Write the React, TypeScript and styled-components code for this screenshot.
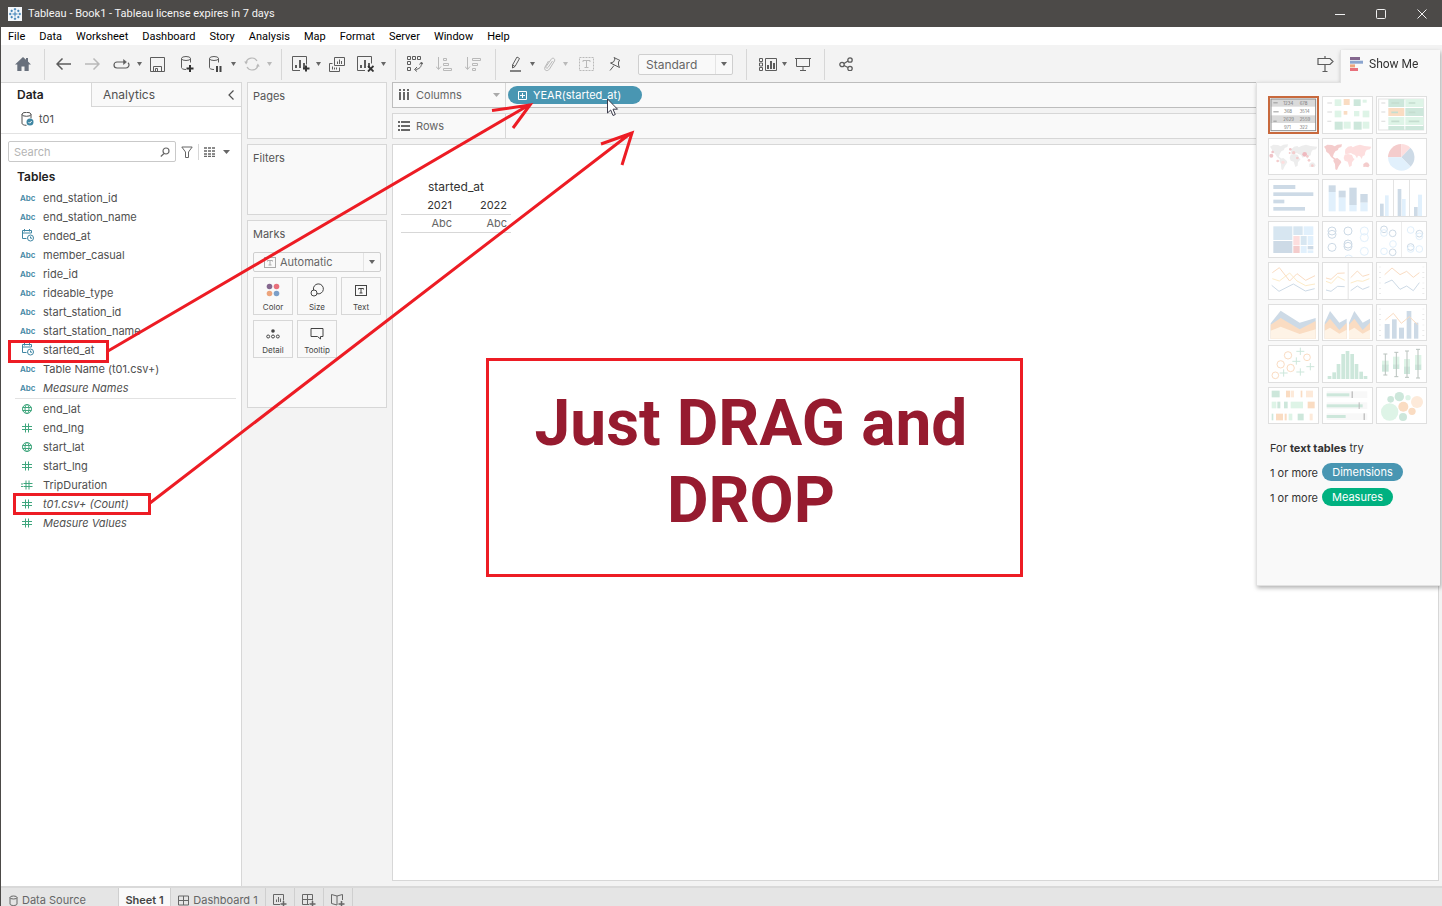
import React from "react";
import styled, { createGlobalStyle, css } from "styled-components";

const ui = `Inter, "Open Sans", sans-serif`;
const sys = `Roboto, "Open Sans", sans-serif`;
const red = "#ed1c24";
const line = "#d7d7d7";
const blue = "#4996b2";
const green = "#00b180";

const GlobalStyle = createGlobalStyle`
  * { box-sizing: border-box; }
  body { margin: 0; font-family: ${ui}; font-size: 11px; color: #505050; background: #f3f3f3; }
  button, input, select { font: inherit; color: inherit; margin: 0; padding: 0; border: 0; background: none; border-radius: 0; }
  svg { display: block; flex: none; }
  ul, h2, p { margin: 0; padding: 0; list-style: none; }
`;

const Window = styled.div`
  position: relative;
  display: flex;
  flex-direction: column;
  height: 100vh;
  min-height: 640px;
  border-left: 1px solid #4c4a48;
  overflow: hidden;
`;

const TitleBar = styled.header`
  flex: none;
  height: 27px;
  display: flex;
  align-items: center;
  gap: 6px;
  padding-left: 7px;
  background: #4c4a48;
  color: #f4f4f4;
  font: 11px ${sys};
`;
const WindowButtons = styled.div`
  margin-left: auto;
  display: flex;
`;
const WindowButton = styled.button`
  width: 41px;
  height: 27px;
  display: flex;
  align-items: center;
  justify-content: center;
  color: #f0f0f0;
`;

const MenuBar = styled.nav`
  flex: none;
  height: 18px;
  display: flex;
  align-items: center;
  gap: 14px;
  padding: 1px 0 0 7px;
  background: #fff;
`;
const MenuItem = styled.button`
  font: 11px ${sys};
  line-height: 18px;
  color: #000;
`;

const Toolbar = styled.div`
  flex: none;
  height: 37px;
  display: flex;
  align-items: center;
  padding-top: 1px;
`;
const ToolGroup = styled.div<{ $lead: number; $trail?: number; $first?: boolean }>`
  display: flex;
  align-items: center;
  height: 31px;
  padding: 0 ${(p) => p.$trail ?? 8}px 0 ${(p) => p.$lead}px;
  border-left: ${(p) => (p.$first ? "0" : `1px solid ${line}`)};
`;
const Tool = styled.button<{ $narrow?: boolean; $dim?: boolean }>`
  width: ${(p) => (p.$narrow ? 26 : 29)}px;
  height: 28px;
  display: flex;
  align-items: center;
  justify-content: center;
  color: ${(p) => (p.$dim ? "#b9b9b9" : "#5c5c5c")};
`;
const CaretButton = styled.button<{ $dim?: boolean }>`
  width: 7px;
  height: 28px;
  display: flex;
  align-items: center;
  justify-content: center;
  color: ${(p) => (p.$dim ? "#b9b9b9" : "#666")};
`;
const Spacer = styled.div`
  flex: 1;
`;
const Gap = styled.div<{ $w: number }>`
  width: ${(p) => p.$w}px;
`;
const SelectBox = styled.div<{ $width?: number; $height: number }>`
  display: flex;
  align-items: center;
  position: relative;
  width: ${(p) => (p.$width ? `${p.$width}px` : "100%")};
  height: ${(p) => p.$height}px;
  border: 1px solid #cfcfcf;
  border-radius: 2px;
  background: #f9f9f9;
  color: #666;
`;
const Select = styled.select<{ $indent: number; $big?: boolean }>`
  appearance: none;
  width: 100%;
  height: 100%;
  padding-left: ${(p) => p.$indent}px;
  font-size: ${(p) => (p.$big ? 12 : 11)}px;
`;
const SelectArrow = styled.span`
  position: absolute;
  right: 0;
  top: 0;
  bottom: 0;
  width: 17px;
  display: flex;
  align-items: center;
  justify-content: center;
  border-left: 1px solid #e4e4e4;
  pointer-events: none;
`;
const SelectIcon = styled.span`
  position: absolute;
  left: 10px;
  color: #aaa;
  pointer-events: none;
`;

const Workspace = styled.div`
  flex: 1;
  min-height: 0;
  display: flex;
`;

const DataPane = styled.aside`
  flex: none;
  width: 241px;
  background: #fff;
  border-top: 1px solid ${line};
  border-right: 1px solid ${line};
`;
const PaneTabs = styled.div`
  display: flex;
  height: 24px;
`;
const PaneTab = styled.button<{ $active?: boolean }>`
  font-size: 12px;
  text-align: left;
  ${(p) =>
    p.$active
      ? css`
          width: 90px;
          padding: 0 0 2px 16px;
          font-weight: 600;
          color: #222;
        `
      : css`
          flex: 1;
          padding-left: 11px;
          background: #f9f9f9;
          border-left: 1px solid ${line};
          border-bottom: 1px solid ${line};
        `}
`;
const Collapse = styled.button`
  width: 20px;
  display: flex;
  align-items: center;
  justify-content: center;
  background: #f9f9f9;
  border-bottom: 1px solid ${line};
`;
const Source = styled.div`
  height: 27px;
  display: flex;
  align-items: center;
  gap: 4px;
  padding: 0 0 2px 20px;
  border-bottom: 1px solid #e2e2e2;
`;
const SearchRow = styled.div`
  display: flex;
  align-items: center;
  padding: 7px 0 0 7px;
  color: #666;
`;
const SearchBox = styled.label`
  display: flex;
  align-items: center;
  width: 168px;
  height: 21px;
  padding: 0 5px;
  border: 1px solid #c9c9c9;
  border-radius: 2px;
`;
const SearchInput = styled.input`
  flex: 1;
  min-width: 0;
  outline: 0;
  &::placeholder {
    color: #b4b4b4;
  }
`;
const RowTool = styled.button<{ $w: number; $divided?: boolean }>`
  width: ${(p) => p.$w}px;
  height: 16px;
  display: flex;
  align-items: center;
  justify-content: center;
  border-left: ${(p) => (p.$divided ? `1px solid ${line}` : "0")};
`;
const Heading = styled.h2`
  padding: 6px 0 2px 16px;
  font-size: 12px;
  line-height: 18px;
  font-weight: 600;
  color: #222;
`;
const FieldList = styled.ul<{ $divided?: boolean }>`
  margin: 0 5px 0 14px;
  padding-bottom: 1px;
  border-top: ${(p) => (p.$divided ? "1px solid #e2e2e2" : "0")};
`;
const Field = styled.li<{ $italic?: boolean }>`
  display: flex;
  align-items: center;
  height: 19px;
  font-style: ${(p) => (p.$italic ? "italic" : "normal")};
`;
const FieldIcon = styled.span<{ $green?: boolean; $text?: boolean }>`
  width: 28px;
  display: flex;
  padding-left: ${(p) => (p.$text ? 5 : 6)}px;
  font-size: 8px;
  font-style: normal;
  font-weight: 600;
  color: ${(p) => (p.$green ? "#3fa67d" : "#3f86a3")};
`;

const Cards = styled.section`
  flex: none;
  width: 140px;
  margin-left: 5px;
  display: flex;
  flex-direction: column;
  gap: 5px;
`;
const Card = styled.section<{ $h: number }>`
  height: ${(p) => p.$h}px;
  padding: 4px 5px;
  border: 1px solid ${line};
  background: #f9f9f9;
`;
const CardTitle = styled.h2`
  font-size: 11px;
  font-weight: 400;
  line-height: 18px;
  color: #555;
`;
const MarksBody = styled.div`
  padding-top: 9px;
`;
const MarkGrid = styled.div`
  display: grid;
  grid-template-columns: repeat(3, 1fr);
  gap: 5px 4px;
  padding-top: 5px;
`;
const MarkButton = styled.button`
  height: 38px;
  display: flex;
  flex-direction: column;
  align-items: center;
  justify-content: space-between;
  padding: 5px 0 1px;
  border: 1px solid ${line};
  font-size: 8px;
  line-height: 12px;
  color: #444;
`;

const Main = styled.main`
  flex: 1;
  min-width: 0;
  display: flex;
  flex-direction: column;
  gap: 5px;
  padding: 0 3px 5px 5px;
`;
const Shelf = styled.div<{ $active?: boolean }>`
  flex: none;
  display: flex;
  height: 26px;
  border: 1px solid ${(p) => (p.$active ? "#bdbdbd" : line)};
  background: #f9f9f9;
`;
const ShelfLabel = styled.div`
  width: 113px;
  display: flex;
  align-items: center;
  gap: 6px;
  padding: 0 5px;
  border-right: 1px solid ${line};
  color: #666;
`;
const ShelfCaret = styled.span`
  margin-left: auto;
  color: #aaa;
`;
const Pill = styled.button<{ $color: string; $w: number; $lead?: number }>`
  display: inline-flex;
  align-items: center;
  justify-content: ${(p) => (p.$lead ? "flex-start" : "center")};
  gap: 6px;
  width: ${(p) => p.$w}px;
  height: 18px;
  padding-left: ${(p) => p.$lead ?? 0}px;
  border-radius: 9px;
  background: ${(p) => p.$color};
  color: #fff;
`;
const ShelfContent = styled.div`
  padding: 3px 2px;
`;
const View = styled.div`
  flex: 1;
  background: #fff;
  border: 1px solid ${line};
  padding: 33px 8px;
`;
const Crosstab = styled.table`
  border-collapse: collapse;
  width: 110px;
  table-layout: fixed;
  th,
  td {
    height: 18px;
    padding: 0 4px 0 0;
    font-weight: 400;
    line-height: 16px;
    text-align: right;
  }
  thead th {
    color: #333;
  }
  thead th[colspan] {
    font-size: 12px;
    text-align: center;
    padding: 0;
  }
  tbody td {
    border-top: 1px solid ${line};
    border-bottom: 1px solid ${line};
    color: #666;
  }
`;

const SheetTabs = styled.nav`
  flex: none;
  height: 20px;
  display: flex;
  overflow: hidden;
  border-top: 2px solid #d9d9d9;
  background: #e5e5e5;
`;
const SheetTab = styled.button<{ $w: number; $active?: boolean; $start?: boolean }>`
  width: ${(p) => p.$w}px;
  height: 24px;
  display: flex;
  align-items: center;
  justify-content: ${(p) => (p.$start ? "flex-start" : "center")};
  gap: 4px;
  padding-left: ${(p) => (p.$start ? 8 : 0)}px;
  border-right: 1px solid #cfcfcf;
  color: #666;
  ${(p) =>
    p.$active &&
    css`
      background: #f9f9f9;
      font-weight: 600;
      color: #444;
    `}
`;

const ShowMe = styled.section`
  position: absolute;
  top: 50px;
  right: 2px;
  width: 184px;
  display: flex;
  flex-direction: column;
  filter: drop-shadow(1px 2px 2px rgba(0, 0, 0, 0.3));
`;
const ShowMeTab = styled.button`
  align-self: flex-end;
  width: 100px;
  height: 33px;
  margin-bottom: -1px;
  display: flex;
  align-items: center;
  gap: 6px;
  padding: 0 0 6px 9px;
  border-left: 1px solid #e2e2e2;
  background: #f9f9f9;
  font: 12px ${sys};
  color: #333;
  z-index: 1;
`;
const ShowMeBody = styled.div`
  padding: 13px 11px 75px;
  border: 1px solid #e2e2e2;
  border-right: 0;
  background: #f9f9f9;
  color: #333;
`;
const Thumbs = styled.div`
  width: 159px;
  height: 328px;
  display: grid;
  grid-template-columns: repeat(3, 1fr);
  grid-template-rows: repeat(8, 1fr);
  gap: 4px 3px;
`;
const Thumb = styled.button<{ $on?: boolean }>`
  min-height: 0;
  overflow: hidden;
  background: #fff;
  border: 1px solid #dfdfdf;
  outline: ${(p) => (p.$on ? "2px solid #c8693d" : "0")};
  outline-offset: -2px;
`;
const Hint = styled.p`
  display: flex;
  align-items: center;
  gap: 4px;
  height: 25px;
  padding-left: 2px;
  ${Pill} {
    margin-bottom: 2px;
  }
`;
const Hints = styled.div`
  padding-top: 11px;
`;

const Marker = styled.div<{ $x: number; $y: number; $w: number; $h: number }>`
  position: absolute;
  left: ${(p) => p.$x}px;
  top: ${(p) => p.$y}px;
  width: ${(p) => p.$w}px;
  height: ${(p) => p.$h}px;
  border: 3px solid ${red};
  pointer-events: none;
`;
const Callout = styled(Marker)`
  padding: 24px 7px 0 0;
  background: #fff;
  font: 700 64px / 77px Roboto, sans-serif;
  color: #961b2f;
  text-align: center;
`;
const Overlay = styled.svg`
  position: absolute;
  left: -1px;
  top: 0;
  pointer-events: none;
`;

type GlyphProps = { w: number; h: number; sw?: number; children: React.ReactNode };
const Glyph = ({ w, h, sw = 1, children }: GlyphProps) => (
  <svg width={w} height={h} viewBox={`0 0 ${w} ${h}`} fill="none" stroke="currentColor" strokeWidth={sw} aria-hidden="true">
    {children}
  </svg>
);
const Caret = ({ w = 5 }: { w?: number }) => (
  <svg width={w} height="4" viewBox="0 0 6 4" fill="currentColor" preserveAspectRatio="none" aria-hidden="true">
    <path d="M0 0h6L3 4z" />
  </svg>
);
const Cylinder = () => <path d="M.5 2.5v9c0 1 1.500 2 4.500 2M9.500 2.500v4M.5 2.500a4.500 2 0 0 0 9 0a4.500 2 0 0 0-9 0" />;
const TBox = ({ dashed }: { dashed?: boolean }) => (
  <>
    <rect x=".5" y=".5" width={dashed ? 14 : 11} height={dashed ? 13 : 10} strokeDasharray={dashed ? "2 1" : undefined} />
    {dashed ? <path d="M4 5V3.500h7V5M7.500 3.500v7M5.500 10.500h4" /> : <path d="M3.500 4.500v-1h5v1M6 3.500v4.500M4.500 8h3" />}
  </>
);
const Bars = ({ x = 0, y = 0 }: { x?: number; y?: number }) => (
  <path transform={`translate(${x} ${y})`} strokeWidth="2" d="M1 8V5M5 8V0M9 8V3" />
);

const CalendarIcon = () => (
  <Glyph w={14} h={13}>
    <path d="M5.500 9.500h-4v-8h9V4M1.500 4h9M3.500 0v2.500M8.500 0v2.500" />
    <circle cx="9.500" cy="9" r="3" />
    <path d="M9.500 7.500V9.200h1.500" />
  </Glyph>
);
const GlobeIcon = () => (
  <Glyph w={12} h={12}>
    <circle cx="6" cy="6" r="4.500" />
    <ellipse cx="6" cy="6" rx="2" ry="4.500" />
    <path d="M1.500 4.500h9M1.500 7.500h9" />
  </Glyph>
);
const HashIcon = () => (
  <Glyph w={12} h={12}>
    <path d="M4.500 1.500v9M7.500 1.500v9M1 4.500h10M1 7.500h10" />
  </Glyph>
);
const CalcHashIcon = () => (
  <Glyph w={14} h={12}>
    <path d="M-.5 5h2.500M-.5 7.500h2.500M5 1.500v9M8 1.500v9M2.500 4.500h9M2.500 7.500h9" />
  </Glyph>
);

type Kind = "abc" | "date" | "geo" | "num" | "calc";
const FieldGlyph = ({ kind }: { kind: Kind }) => {
  if (kind === "abc") return <>Abc</>;
  if (kind === "date") return <CalendarIcon />;
  if (kind === "geo") return <GlobeIcon />;
  if (kind === "calc") return <CalcHashIcon />;
  return <HashIcon />;
};

const dimensions: [Kind, string, boolean?][] = [
  ["abc", "end_station_id"],
  ["abc", "end_station_name"],
  ["date", "ended_at"],
  ["abc", "member_casual"],
  ["abc", "ride_id"],
  ["abc", "rideable_type"],
  ["abc", "start_station_id"],
  ["abc", "start_station_name"],
  ["date", "started_at"],
  ["abc", "Table Name (t01.csv+)"],
  ["abc", "Measure Names", true],
];
const measures: [Kind, string, boolean?][] = [
  ["geo", "end_lat"],
  ["num", "end_lng"],
  ["geo", "start_lat"],
  ["num", "start_lng"],
  ["calc", "TripDuration"],
  ["num", "t01.csv+ (Count)", true],
  ["num", "Measure Values", true],
];

/* Chart thumbnails: three drawing units to the pixel. */
const b1 = "#cddae6";
const b2 = "#e1f0fc";
const g1 = "#cde7db";
const g2 = "#def4e7";
const o1 = "#fadcc2";
const o2 = "#fdeada";
const r1 = "#f4cccc";
const r2 = "#fddede";
const gray = "#e3e3e3";

type Box = [number, number, number, number, string];
const Rects = ({ items }: { items: Box[] }) => (
  <>
    {items.map(([x, y, w, h, f], i) => (
      <rect key={i} x={x} y={y} width={w} height={h} fill={f} />
    ))}
  </>
);
type Dot = [number, number, number, string];
const Rings = ({ items, filled }: { items: Dot[]; filled?: boolean }) => (
  <>
    {items.map(([x, y, r, c], i) => (
      <circle key={i} cx={x} cy={y} r={r} fill={filled ? c : "none"} stroke={filled ? "none" : c} strokeWidth="3" />
    ))}
  </>
);
const Lines = ({ items }: { items: [string, string][] }) => (
  <>
    {items.map(([d, c], i) => (
      <path key={i} d={d} stroke={c} strokeWidth="3" fill="none" />
    ))}
  </>
);
const Americas = "M6 26l10-6 14 1 8 4 8-5 14-1-2 8-8 3-2 6-8 4-5 8-2 8 6 5-2 4-10-8-6-10-8-6-2-8zM36 62l10-2 10 8 2 5-8 12-5 11-5-2-1-16-5-9z";
const EastLands = "M70 34l8-8 10-2 4 4 10-5 12-3 14 4 20 2-4 8-10 2-4 6-2 10-6 3-3 8-5-8-6-2-3 8-6-10-8-3-4-3-8 2-9 2-1-7zM68 50l10-2 12 3 4 10 4 2-8 10-1 10-7 4-5-16-9-3-3-8z";
const Oceania = "M124 78l8-5 6 1 5 8-4 6-8-2-7 1z";

const charts: { name: string; art: React.ReactNode }[] = [
  {
    name: "Text table",
    art: (
      <>
        <Rects items={[[8, 9, 136, 23, "#dadada"], [8, 58, 136, 23, "#dadada"], [16, 19, 13, 3, "#999"], [16, 46, 16, 3, "#999"], [16, 74, 10, 3, "#999"]]} />
        <rect x="9" y="9" width="134" height="95" fill="none" stroke="#8c8c8c" strokeWidth="3" />
        <g fill="#777" fontSize="13" fontFamily="Inter, sans-serif">
          <text x="46" y="26">1234</text>
          <text x="95" y="26">678</text>
          <text x="48" y="52">368</text>
          <text x="95" y="52">3514</text>
          <text x="46" y="75">2629</text>
          <text x="95" y="75">2559</text>
          <text x="48" y="98">971</text>
          <text x="95" y="98">322</text>
        </g>
      </>
    ),
  },
  {
    name: "Heat map",
    art: (
      <Rects
        items={[
          [16, 19, 14, 4, gray], [16, 46, 14, 4, gray], [16, 74, 12, 4, gray],
          [38, 10, 20, 20, g2], [65, 9, 18, 18, o1], [95, 10, 21, 20, g1], [122, 11, 12, 9, g2],
          [38, 44, 20, 20, g2], [65, 45, 11, 11, o1], [96, 45, 16, 16, g2], [122, 44, 20, 20, g2],
          [38, 77, 24, 24, g1], [65, 77, 21, 21, g2], [95, 77, 24, 24, g1], [122, 77, 20, 21, g2],
        ]}
      />
    ),
  },
  {
    name: "Highlight table",
    art: (
      <>
        <rect x="8" y="9" width="135" height="93" fill="none" stroke={gray} strokeWidth="3" />
        <Rects
          items={[
            [16, 19, 12, 4, gray], [16, 46, 12, 4, gray], [16, 74, 12, 4, gray],
            [37, 9, 48, 24, g1], [88, 9, 55, 24, g2], [37, 36, 48, 24, o1], [88, 36, 55, 24, g1],
            [37, 63, 48, 24, g2], [88, 63, 55, 24, g2], [37, 90, 48, 12, g1], [88, 90, 55, 12, g1],
          ]}
        />
        <path d="M46 21h24M98 21h20M46 49h20M98 49h20M46 76h24M98 76h32" stroke="#c5ddd0" strokeWidth="5" />
      </>
    ),
  },
  {
    name: "Symbol map",
    art: (
      <>
        <path d={Americas + EastLands + Oceania} fill="#ededed" />
        <Rings filled items={[[10, 53, 6, "#efc4c8"], [14, 42, 4, "#efc4c8"], [29, 69, 4, r1], [45, 73, 5, r2], [67, 34, 4, "#efc4c8"], [65, 45, 3, r1], [77, 44, 5, r1], [88, 60, 4, r1], [110, 49, 7, "#efb9bf"], [118, 55, 4, r1], [123, 67, 4, r1], [133, 83, 4, r1]]} />
      </>
    ),
  },
  {
    name: "Filled map",
    art: (
      <>
        <path d={Americas} fill={r1} />
        <path d={EastLands} fill={r2} />
        <path d={Oceania} fill={r1} />
      </>
    ),
  },
  {
    name: "Pie chart",
    art: (
      <>
        <path d="M76 58V18a40 40 0 0 0-40 40z" fill={r1} />
        <path d="M76 58V18a40 40 0 0 1 27 11z" fill={r2} />
        <path d="M76 58l27-29a40 40 0 0 1 1 57z" fill={b1} />
        <path d="M76 58l28 28a40 40 0 0 1-68-28z" fill={b2} />
      </>
    ),
  },
  { name: "Horizontal bars", art: <Rects items={[[16, 18, 66, 12, b1], [16, 40, 120, 11, b1], [16, 62, 33, 11, b1], [16, 84, 95, 11, b1]]} /> },
  {
    name: "Stacked bars",
    art: <Rects items={[[20, 19, 21, 20, b1], [20, 39, 21, 58, b2], [50, 35, 21, 21, b1], [50, 56, 21, 41, b2], [82, 26, 22, 52, b1], [82, 78, 22, 19, b2], [115, 45, 22, 26, b1], [115, 71, 22, 26, b2]]} />,
  },
  {
    name: "Side-by-side bars",
    art: <Rects items={[[12, 74, 11, 38, b1], [27, 49, 11, 63, b2], [51, 3, 3, 110, gray], [65, 30, 11, 82, b1], [78, 60, 11, 52, b2], [99, 3, 3, 110, gray], [114, 84, 11, 28, b1], [126, 47, 12, 65, b2]]} />,
  },
  {
    name: "Treemap",
    art: <Rects items={[[16, 16, 57, 41, "#d7e6f1"], [16, 60, 57, 36, b1], [76, 16, 28, 26, "#d7e6f1"], [107, 16, 29, 26, b2], [76, 45, 19, 28, r2], [76, 75, 19, 21, r1], [98, 45, 18, 27, "#d7e6f1"], [98, 75, 18, 21, b2], [119, 45, 17, 27, b2], [119, 75, 17, 10, b1], [119, 88, 17, 8, b2]]} />,
  },
  {
    name: "Circle views",
    art: <Rings items={[[30, 30, 12, b1], [30, 40, 12, b1], [30, 79, 12, b1], [78, 30, 12, b1], [78, 69, 12, b1], [78, 76, 12, b1], [80, 114, 12, b2], [127, 30, 12, b2], [127, 50, 12, b2], [127, 91, 12, b2]]} />,
  },
  {
    name: "Side-by-side circles",
    art: (
      <>
        <Rects items={[[76, 3, 2, 110, gray]]} />
        <Rings items={[[24, 25, 10, b1], [24, 36, 10, b2], [50, 37, 10, b1], [51, 69, 10, b2], [24, 91, 10, b2], [50, 94, 10, b1], [104, 27, 10, b2], [130, 38, 10, b1], [130, 46, 10, b2], [104, 78, 10, b1], [104, 84, 10, b2], [130, 84, 10, b2]]} />
      </>
    ),
  },
  {
    name: "Lines (continuous)",
    art: <Lines items={[["M13 32l21-15 31 40 22-22 26 20 28-14", o1], ["M13 50l21 7 31-24 22 24 26 14 28-5", "#fdebc8"], ["M11 70l22 18 43-22 36 21 28-7", b1]]} />,
  },
  {
    name: "Lines (discrete)",
    art: (
      <>
        <Rects items={[[77, 3, 3, 110, gray]]} />
        <Lines items={[["M12 48l15 4 20-18 21-1M86 47l20-20 16 16 20-6", o1], ["M12 58l16 6 19-20 21 11M86 63l20-7 16 2 20-8", "#fdebc8"], ["M12 84l15 4 20-15 21 1M86 86l20-14 16 10 20-8", b1]]} />
      </>
    ),
  },
  {
    name: "Dual lines",
    art: (
      <>
        <Lines items={[["M26 38l22-20 24 20 20-10 20 18 18-14", o1], ["M26 64l22-10 24 28 20-10 20 14 18-24", b1]]} />
        <path d="M12 14v90M142 14v90" stroke={gray} strokeWidth="6" strokeDasharray="2 14" />
      </>
    ),
  },
  {
    name: "Area charts (continuous)",
    art: (
      <>
        <path d="M8 58l30-38 57 36 48-14v62H8z" fill={b1} />
        <path d="M8 62l30-20 57 34 48-25v53H8z" fill={o1} />
        <path d="M8 80l30-12 57 22 48-14v28H8z" fill="#fef3e6" />
      </>
    ),
  },
  {
    name: "Area charts (discrete)",
    art: (
      <>
        <path d="M8 56l16-35 28 35 22-12v60H8zM81 56l16-35 25 35 22-12v60H81z" fill={b1} />
        <path d="M8 62l16-18 28 34 22-22v48H8zM81 62l16-18 25 34 22-22v48H81z" fill={o1} />
        <path d="M8 80l16-9 28 18 22-12v27H8zM81 80l16-9 25 18 22-12v27H81z" fill="#fef3e6" />
      </>
    ),
  },
  {
    name: "Dual combination",
    art: (
      <>
        <Rects items={[[26, 60, 15, 44, b1], [48, 46, 14, 58, b1], [69, 71, 15, 33, b1], [92, 21, 14, 83, b1], [114, 56, 13, 48, b1]]} />
        <Lines items={[["M28 48l24-20 24 30 24-20 25 24", o1]]} />
        <path d="M12 14v90M142 14v90" stroke={gray} strokeWidth="6" strokeDasharray="2 14" />
      </>
    ),
  },
  {
    name: "Scatter plot",
    art: (
      <>
        <Rings items={[[60, 31, 11, o1], [117, 37, 10, o1], [38, 58, 11, o1], [68, 69, 11, o1], [22, 91, 10, o1]]} />
        <Lines items={[["M97 8v22M85 19h24M85 37v22M73 49h24M127 54v22M115 65h24M47 73v22M35 84h24M97 70v22M85 81h24", g1]]} />
      </>
    ),
  },
  {
    name: "Histogram",
    art: <Rects items={[[17, 93, 11, 9, g1], [31, 82, 11, 20, g1], [44, 57, 11, 45, g1], [58, 27, 11, 75, g1], [71, 18, 11, 84, g1], [85, 27, 11, 75, g1], [98, 57, 11, 45, g1], [112, 80, 11, 22, g1], [125, 93, 11, 9, g1]]} />,
  },
  {
    name: "Box-and-whisker plot",
    art: (
      <>
        <Rects items={[[18, 47, 20, 15, g2], [18, 59, 20, 21, g1], [51, 35, 19, 24, g2], [51, 58, 19, 14, g1], [84, 42, 18, 24, g2], [84, 65, 18, 22, g1], [117, 30, 19, 30, g2], [117, 59, 19, 16, g1]]} />
        <path d="M28 27v63M61 22v73M93 18v79M126 13v86M22 27h12M22 90h12M55 22h12M55 95h12M87 18h12M87 97h12M120 13h12M120 99h12" stroke="#b9c2bd" strokeWidth="3" fill="none" />
      </>
    ),
  },
  {
    name: "Gantt view",
    art: (
      <Rects
        items={[
          [11, 11, 24, 20, g1], [54, 11, 12, 20, o1], [68, 11, 10, 20, o2], [98, 11, 5, 20, o1], [114, 11, 21, 20, o2],
          [11, 44, 14, 20, g2], [28, 44, 9, 20, g1], [48, 44, 11, 20, g1], [68, 44, 37, 20, g2], [119, 44, 21, 20, o1],
          [11, 80, 5, 20, g1], [24, 80, 21, 20, o1], [50, 80, 6, 20, o1], [62, 80, 11, 20, g2], [89, 80, 18, 20, g1], [125, 80, 9, 20, o2],
        ]}
      />
    ),
  },
  {
    name: "Bullet graph",
    art: (
      <Rects
        items={[
          [14, 13, 122, 20, "#f8f8f8"], [14, 46, 122, 20, "#f8f8f8"], [14, 79, 122, 20, "#f8f8f8"],
          [14, 19, 68, 9, g1], [14, 52, 108, 9, g1], [14, 84, 57, 9, g1],
          [89, 13, 3, 20, "#aaa"], [110, 46, 3, 20, "#bbb"], [125, 79, 3, 20, "#aaa"],
        ]}
      />
    ),
  },
  {
    name: "Packed bubbles",
    art: <Rings filled items={[[41, 75, 26, g2], [70, 29, 14, g1], [44, 37, 10, g1], [96, 32, 8, g2], [82, 59, 15, o1], [123, 45, 18, o2], [108, 73, 11, o1], [81, 90, 12, g1]]} />,
  },
];

const FieldRows = ({ rows, measure }: { rows: [Kind, string, boolean?][]; measure?: boolean }) => (
  <FieldList $divided={measure}>
    {rows.map(([kind, name, italic]) => (
      <Field key={name} $italic={italic}>
        <FieldIcon $green={measure} $text={kind === "abc"}>
          <FieldGlyph kind={kind} />
        </FieldIcon>
        {name}
      </Field>
    ))}
  </FieldList>
);

export default function App() {
  return (
    <>
      <GlobalStyle />
      <Window>
        <TitleBar>
          <svg width="14" height="14" viewBox="0 0 14 14" aria-hidden="true">
            <rect width="14" height="14" fill="#f4f7fa" />
            <path d="M7 4.500v5M4.500 7h5M7 1v2.500M5.800 2.200h2.400M7 10.500V13M5.800 11.800h2.400M1 7h2.500M2.200 5.800v2.400M10.500 7H13M11.800 5.800v2.400M3.700 2.700v2.400M2.500 3.900h2.400M10.300 2.700v2.400M9.100 3.900h2.400M3.700 8.900v2.400M2.500 10.100h2.400M10.300 8.900v2.400M9.100 10.100h2.400" stroke="#3a7fb5" strokeWidth="1" />
          </svg>
          <span>Tableau - Book1 - Tableau license expires in 7 days</span>
          <WindowButtons>
            <WindowButton aria-label="Minimize"><Glyph w={10} h={10}><path d="M0 5.500h10" /></Glyph></WindowButton>
            <WindowButton aria-label="Maximize"><Glyph w={10} h={10}><rect x=".5" y=".5" width="9" height="9" rx="1" /></Glyph></WindowButton>
            <WindowButton aria-label="Close"><Glyph w={10} h={10}><path d="M.5.5l9 9M9.500.5l-9 9" /></Glyph></WindowButton>
          </WindowButtons>
        </TitleBar>

        <MenuBar>
          {["File", "Data", "Worksheet", "Dashboard", "Story", "Analysis", "Map", "Format", "Server", "Window", "Help"].map((m) => (
            <MenuItem key={m}>{m}</MenuItem>
          ))}
        </MenuBar>

        <Toolbar>
          <ToolGroup $first $lead={7} $trail={7}>
            <Tool aria-label="Home">
              <svg width="16" height="14" viewBox="0 0 16 14" fill="#68707c" aria-hidden="true">
                <path d="M8 0l3 2.700V1h2v3.500L16 7.500h-2.300V14H9.500V9.500h-3V14H2.300V7.500H0z" />
              </svg>
            </Tool>
          </ToolGroup>
          <ToolGroup $lead={4}>
            <Tool aria-label="Back"><Glyph w={15} h={12} sw={1.5}><path d="M15 6H1M6.500.5L1 6l5.500 5.500" /></Glyph></Tool>
            <Tool aria-label="Forward" $dim><Glyph w={15} h={12} sw={1.5}><path d="M0 6h14M8.500.5L14 6l-5.500 5.500" /></Glyph></Tool>
            <Tool aria-label="Replay"><Glyph w={17} h={11} sw={1.2}><path d="M12 3H4a3 3 0 0 0-3 3a3 3 0 0 0 3 3h9a3 3 0 0 0 2-5.200" /><path d="M10.500.5L13.500 3l-3 2.500z" fill="currentColor" strokeWidth=".5" /></Glyph></Tool>
            <CaretButton aria-label="Replay options"><Caret /></CaretButton>
            <Tool aria-label="Save"><Glyph w={15} h={15}><path d="M.5.5h14v14H.5zM3.500 14.500V9.500h8v5M5.500 14v-2.500h2V14" /></Glyph></Tool>
            <Tool aria-label="New data source"><Glyph w={15} h={17}><g transform="translate(2 0)"><Cylinder /></g><path d="M11 9v7M7.500 12.500h7" stroke="#333" strokeWidth="2" /></Glyph></Tool>
            <Tool aria-label="Pause auto updates"><Glyph w={13} h={17}><Cylinder /><path d="M8 10v6M11.500 10v6" stroke="#444" strokeWidth="2" /></Glyph></Tool>
            <CaretButton aria-label="Update options"><Caret /></CaretButton>
            <Tool aria-label="Run update" $dim>
              <Glyph w={16} h={14} sw={1.2}>
                <path d="M2 5.500A6 6 0 0 1 13 4M14 8.500A6 6 0 0 1 3 10" />
                <path d="M.2 4.500h3.800L2.100 7.500zM12 9.500h3.800l-1.900-3z" fill="currentColor" stroke="none" />
              </Glyph>
            </Tool>
            <CaretButton aria-label="Run options" $dim><Caret /></CaretButton>
          </ToolGroup>
          <ToolGroup $lead={4}>
            <Tool aria-label="New worksheet"><Glyph w={18} h={16}><path d="M8 14.500H.5v-14h14v8" /><Bars x={3} y={4} /><path d="M14 9.500v6M11 12.500h6.500" stroke="#333" strokeWidth="2" /></Glyph></Tool>
            <CaretButton aria-label="New options"><Caret /></CaretButton>
            <Tool aria-label="Duplicate"><Glyph w={16} h={15}><path d="M5.500.5h10v8h-10zM3.500 6.500h-3v8h10v-4M8.500 7V4.500M10.500 7V2.500M12.500 7V4M3.500 12.500v-3M5.500 12.500v-2M7.500 12.500v-2" /></Glyph></Tool>
            <Tool aria-label="Clear sheet"><Glyph w={17} h={16}><path d="M8 14.500H.5v-14h14v7" /><Bars x={3} y={4} /><path d="M11 10l5.500 5.500M16.500 10L11 15.500" stroke="#333" strokeWidth="1.800" /></Glyph></Tool>
            <CaretButton aria-label="Clear options"><Caret /></CaretButton>
          </ToolGroup>
          <ToolGroup $lead={4}>
            <Tool aria-label="Swap rows and columns">
              <Glyph w={16} h={16}>
                <path d="M.5.5h3v3h-3zM5.500.5h3v3h-3zM10.500.5h3v3h-3zM.5 5.500h3v3h-3zM.5 11.500h3v3h-3zM14.500 7c0 4-2 6-6 6.500M12.500 8.500l2-2.500 1.500 2.500M10 11l-2.500 2.500L10 15.500" />
              </Glyph>
            </Tool>
            <Tool aria-label="Sort ascending" $dim><Glyph w={16} h={14}><path d="M2.500 0v12M0 9.500l2.500 3 2.500-3M7.500 1.500h3v2h-3zM7.500 6.500h5v2h-5zM7.500 11.500h8v2h-8z" /></Glyph></Tool>
            <Tool aria-label="Sort descending" $dim><Glyph w={16} h={14}><path d="M2.500 0v12M0 9.500l2.500 3 2.500-3M7.500 1.500h8v2h-8zM7.500 6.500h5v2h-5zM7.500 11.500h3v2h-3z" /></Glyph></Tool>
          </ToolGroup>
          <ToolGroup $lead={7} $trail={13}>
            <Tool aria-label="Highlight" $narrow><Glyph w={12} h={16}><path d="M2.500 9L7 1l2.500 1.500L5 10.500 2.500 12zM2.500 9L5 10.500" /><path d="M0 15h11" strokeWidth="1.500" /></Glyph></Tool>
            <CaretButton aria-label="Highlight options"><Caret /></CaretButton>
            <Tool aria-label="Group members" $narrow $dim><Glyph w={13} h={15}><path d="M9.500 4L5 10.500c-1 1.500-2.500.5-2-.8L8 2.500C9.500 0 12.500 1.500 11.500 4L6.500 12c-2 3-6 1.500-4.500-2L5.500 4" /></Glyph></Tool>
            <CaretButton aria-label="Group options" $dim><Caret /></CaretButton>
            <Gap $w={3} />
            <Tool aria-label="Show mark labels" $dim><Glyph w={15} h={14}><TBox dashed /></Glyph></Tool>
            <Tool aria-label="Fix axes" $narrow><Glyph w={13} h={14}><path d="M6 .5l6 3-1.500 1L10.500 8l1 2.500-9-4.500L5.500 5 7 2zM6 8.500l-4 5" /></Glyph></Tool>
            <Gap $w={11} />
            <SelectBox $width={95} $height={21}>
              <Select $indent={7} $big aria-label="Fit"><option>Standard</option></Select>
              <SelectArrow><Caret w={6} /></SelectArrow>
            </SelectBox>
          </ToolGroup>
          <ToolGroup $lead={8} $trail={7}>
            <Tool aria-label="Show or hide cards" $narrow><Glyph w={18} h={13}><path d="M.5.5h3v3h-3zM.5 5h3v3h-3zM.5 9.500h3v3h-3zM6.500.5h11v12h-11z" /><path d="M9 11V7M12 11V3M15 11V5" strokeWidth="2" /></Glyph></Tool>
            <CaretButton aria-label="Card options"><Caret /></CaretButton>
            <Tool aria-label="Presentation mode"><Glyph w={16} h={14}><path d="M0 1.500h16M1.500 1.500v8h13v-8M8 9.500v4M5 13.500h6" /></Glyph></Tool>
          </ToolGroup>
          <ToolGroup $lead={6}>
            <Tool aria-label="Share"><Glyph w={14} h={14} sw={1.3}><circle cx="3" cy="7.500" r="2.200" /><circle cx="11" cy="3" r="2.200" /><circle cx="11" cy="11.500" r="2.200" /><path d="M5 6.500l4-2.500M5 8.500l4 2" /></Glyph></Tool>
          </ToolGroup>
          <Spacer />
          <ToolGroup $first $lead={0} $trail={102}>
            <Tool aria-label="Data guide"><Glyph w={17} h={16} sw={1.2}><path d="M1 2.500h12l3 3-3 3H1zM8 0v2.500M8 8.500V15.500M5.500 15.500h5" /></Glyph></Tool>
          </ToolGroup>
        </Toolbar>

        <Workspace>
          <DataPane>
            <PaneTabs>
              <PaneTab $active>Data</PaneTab>
              <PaneTab>Analytics</PaneTab>
              <Collapse aria-label="Collapse pane"><Glyph w={6} h={10} sw={1.2}><path d="M5.500.5L1 5l4.500 4.500" /></Glyph></Collapse>
            </PaneTabs>
            <Source>
              <Glyph w={14} h={14}>
                <g transform="translate(.5 -.2)"><Cylinder /></g>
                <circle cx="9" cy="10" r="3.500" fill="#3f86a3" stroke="none" />
                <path d="M7.500 10l1.200 1.200L10.700 9" stroke="#fff" />
              </Glyph>
              t01
            </Source>
            <SearchRow>
              <SearchBox>
                <SearchInput type="text" placeholder="Search" aria-label="Search" />
                <Glyph w={10} h={10} sw={1.2}><circle cx="6" cy="4" r="3" /><path d="M4 6.500L.8 9.500" /></Glyph>
              </SearchBox>
              <RowTool $w={22} aria-label="Filter"><Glyph w={12} h={12}><path d="M.8 1h10.400L7.500 6v5.500h-3V6z" /></Glyph></RowTool>
              <RowTool $w={22} $divided aria-label="View as list"><Glyph w={11} h={10}><path d="M0 1h11M0 4h11M0 7h11M0 9.500h11" strokeWidth="1.500" strokeDasharray="3 1" /></Glyph></RowTool>
              <RowTool $w={12} aria-label="Pane options"><Caret w={7} /></RowTool>
            </SearchRow>
            <Heading>Tables</Heading>
            <FieldRows rows={dimensions} />
            <FieldRows rows={measures} measure />
          </DataPane>

          <Cards>
            <Card $h={57}><CardTitle>Pages</CardTitle></Card>
            <Card $h={71}><CardTitle>Filters</CardTitle></Card>
            <Card $h={188}>
              <CardTitle>Marks</CardTitle>
              <MarksBody>
                <SelectBox $height={20}>
                  <Select $indent={26} aria-label="Mark type"><option>Automatic</option></Select>
                  <SelectIcon><Glyph w={12} h={11}><TBox /></Glyph></SelectIcon>
                  <SelectArrow><Caret w={6} /></SelectArrow>
                </SelectBox>
                <MarkGrid>
                  <MarkButton>
                    <svg width="14" height="14" viewBox="0 0 14 14" aria-hidden="true">
                      <circle cx="3.500" cy="3.500" r="2.800" fill="#85688f" /><circle cx="10.500" cy="3.500" r="2.800" fill="#e8707c" />
                      <circle cx="3.500" cy="10.500" r="2.800" fill="#eca47c" /><circle cx="10.500" cy="10.500" r="2.800" fill="#7c9fc8" />
                    </svg>
                    Color
                  </MarkButton>
                  <MarkButton><Glyph w={14} h={14}><path d="M3.500 7A5 5 0 1 1 7 10.700" /><circle cx="4" cy="10" r="3" /></Glyph>Size</MarkButton>
                  <MarkButton><Glyph w={12} h={14}><g transform="translate(0 2)"><TBox /></g></Glyph>Text</MarkButton>
                  <MarkButton><Glyph w={14} h={14}><circle cx="7" cy="5" r="1.800" fill="currentColor" stroke="none" /><circle cx="2.200" cy="10.500" r="1.500" /><circle cx="7" cy="10.500" r="1.500" /><circle cx="11.800" cy="10.500" r="1.500" /></Glyph>Detail</MarkButton>
                  <MarkButton><Glyph w={14} h={14}><path d="M1 2.500h12v8h-2.500v2.500L7.500 10.500H1z" /></Glyph>Tooltip</MarkButton>
                </MarkGrid>
              </MarksBody>
            </Card>
          </Cards>

          <Main>
            <Shelf $active>
              <ShelfLabel>
                <Glyph w={12} h={12} sw={2}><path d="M2 3v8M6 3v8M10 3v8M2 0v2M6 0v2M10 0v2" /></Glyph>
                Columns
                <ShelfCaret><Caret w={7} /></ShelfCaret>
              </ShelfLabel>
              <ShelfContent>
                <Pill $color={blue} $w={134} $lead={10}>
                  <Glyph w={9} h={9}><path d="M.5.5h8v8h-8zM2 4.500h5M4.500 2v5" /></Glyph>
                  YEAR(started_at)
                </Pill>
              </ShelfContent>
            </Shelf>
            <Shelf>
              <ShelfLabel>
                <Glyph w={12} h={12} sw={2}><path d="M3 2h9M3 6h9M3 10h9M0 2h2M0 6h2M0 10h2" /></Glyph>
                Rows
              </ShelfLabel>
            </Shelf>
            <View>
              <Crosstab>
                <thead>
                  <tr><th colSpan={2}>started_at</th></tr>
                  <tr><th>2021</th><th>2022</th></tr>
                </thead>
                <tbody>
                  <tr><td>Abc</td><td>Abc</td></tr>
                </tbody>
              </Crosstab>
            </View>
          </Main>
        </Workspace>

        <SheetTabs>
          <SheetTab $w={118} $start>
            <Glyph w={9} h={11}><path d="M1 2.500v6.500c0 .8 1.500 1.500 3.500 1.500S8 9.800 8 9V2.500M1 2.500a3.500 1.500 0 0 0 7 0a3.500 1.500 0 0 0-7 0" /></Glyph>
            Data Source
          </SheetTab>
          <SheetTab $w={52} $active>Sheet 1</SheetTab>
          <SheetTab $w={95}><Glyph w={11} h={11}><path d="M.5 1h10v9H.5zM5.500 1v9M.5 5.500h10" /></Glyph>Dashboard 1</SheetTab>
          <SheetTab $w={29} aria-label="New worksheet"><Glyph w={14} h={13}><path d="M7 10.500H.5v-10h10v6M3.500 8V5.500M5.500 8V3M7.500 8V4.500" /><path d="M10.500 7v6M7.500 10h6" strokeWidth="1.500" /></Glyph></SheetTab>
          <SheetTab $w={29} aria-label="New dashboard"><Glyph w={14} h={13}><path d="M7 10.500H.5v-10h10v6M5.500.5v10M.5 5.500h10" /><path d="M10.500 7v6M7.500 10h6" strokeWidth="1.500" /></Glyph></SheetTab>
          <SheetTab $w={29} aria-label="New story"><Glyph w={14} h={13}><path d="M6 2L.5.5v9L6 11V2L11.500.5V6" /><path d="M10.500 7v6M7.500 10h6" strokeWidth="1.500" /></Glyph></SheetTab>
        </SheetTabs>

        <ShowMe>
          <ShowMeTab>
            <svg width="13" height="14" viewBox="0 0 13 14" aria-hidden="true">
              <path d="M0 0h10v3H0z" fill="#85688f" /><path d="M0 3.700h13v3H0z" fill="#8ba5cf" />
              <path d="M0 7.400h5v3H0z" fill="#eca47c" /><path d="M0 11h8v3H0z" fill="#e8707c" />
            </svg>
            Show Me
          </ShowMeTab>
          <ShowMeBody>
            <Thumbs>
              {charts.map((c, i) => (
                <Thumb key={c.name} aria-label={c.name} $on={i === 0}>
                  <svg width="49" height="36" viewBox="3 3 147 108" aria-hidden="true">{c.art}</svg>
                </Thumb>
              ))}
            </Thumbs>
            <Hints>
              <Hint><span>For <b>text tables</b> try</span></Hint>
              <Hint>1 or more <Pill as="span" $color={blue} $w={81}>Dimensions</Pill></Hint>
              <Hint>1 or more <Pill as="span" $color={green} $w={71}>Measures</Pill></Hint>
            </Hints>
          </ShowMeBody>
        </ShowMe>

        <Callout $x={485} $y={358} $w={537} $h={219}>Just DRAG and DROP</Callout>
        <Marker $x={7} $y={340} $w={101} $h={23} />
        <Marker $x={12} $y={493} $w={138} $h={22} />
        <Overlay width="660" height="520" viewBox="0 0 660 520" fill="none" aria-hidden="true">
          <path d="M108 351L529 105M492 110.500l38-5.500-17 23M150 503L631 133M601 144l31-11-10 32" stroke={red} strokeWidth="3" />
          <path d="M607.500 99v14l3.200-3 2.300 5.500 2.300-1-2.300-5.300h4.500z" fill="#fff" stroke="#3a3a4a" />
        </Overlay>
      </Window>
    </>
  );
}
